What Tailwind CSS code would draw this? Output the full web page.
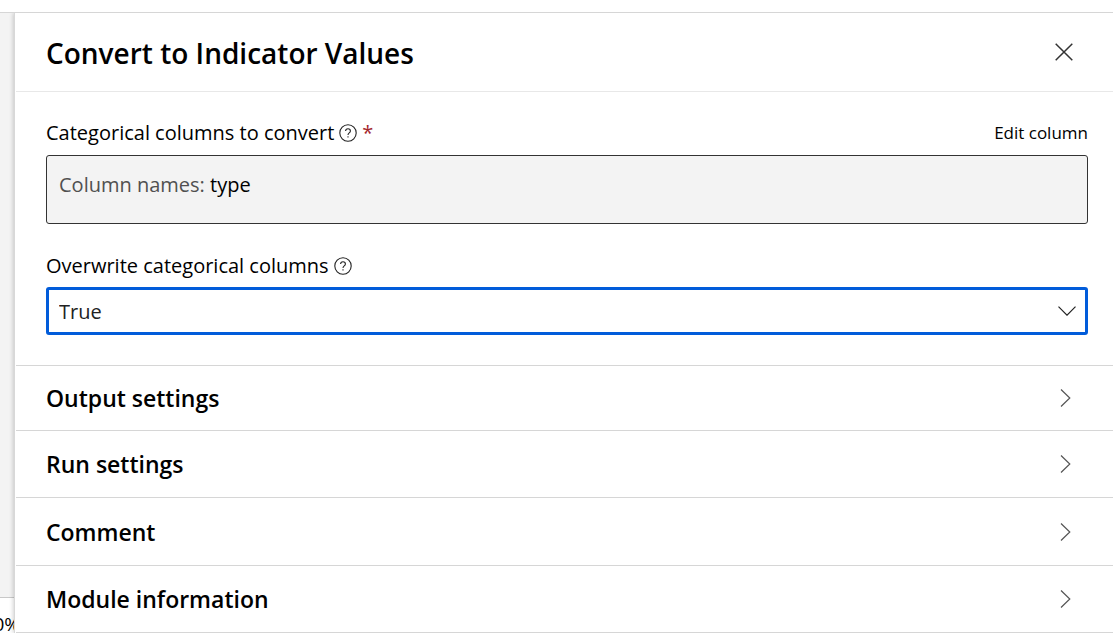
<!DOCTYPE html>
<html lang="en">
<head>
<meta charset="utf-8">
<meta name="viewport" content="width=device-width, initial-scale=1">
<title>Convert to Indicator Values</title>
<script src="https://cdn.jsdelivr.net/npm/@tailwindcss/browser@4"></script>
</head>
<body class="flex h-screen flex-col overflow-hidden bg-white font-['Segoe_UI','Open_Sans',sans-serif] text-black">
<div class="h-[13px] shrink-0 border-b border-[#d6d6d6]"></div>
<div class="flex min-h-0 flex-1">
  <aside class="flex w-3.5 shrink-0 flex-col overflow-hidden bg-[#f3f3f3]">
    <div class="flex-1"></div>
    <div class="flex h-9 justify-end overflow-hidden border-t border-[#c8c8c8] bg-white pt-3 text-[19px] leading-7"><span class="-mr-1.5">0%</span></div>
  </aside>
  <main class="z-10 min-w-0 flex-1 border-l border-[#d8d8d8] bg-white pl-px shadow-[-1px_0_4px_rgba(0,0,0,0.18)] [clip-path:inset(0_0_0_-8px)]">
    <header class="flex h-[79px] items-center justify-between border-b border-[#e8e8e8] pr-10 pl-[30px]">
      <h1 class="pt-0.5 text-[28px] leading-9 font-semibold">Convert to Indicator Values</h1>
      <button type="button" aria-label="Close" class="text-[#333]">
        <svg class="block size-[18px]" viewBox="0 0 18 18" fill="none" stroke="currentColor" stroke-width="1.5"><path d="M.7.7l16.6 16.6M17.3.7L.7 17.3"/></svg>
      </button>
    </header>
    <form class="pt-[27px] pr-[25px] pb-[30px] pl-[30px]">
      <div class="flex h-7 items-center">
        <label for="columns" class="text-[20px] leading-7">Categorical columns to convert</label>
        <button type="button" aria-label="Help for categorical columns" class="ml-[5px]">
          <svg class="block size-[18px]" viewBox="0 0 18 18" fill="none" stroke="#222" stroke-width="1.1"><circle cx="9" cy="9" r="8.2"/><path d="M6.6 7.1c0-1.5 1-2.4 2.4-2.4s2.4.9 2.4 2.2c0 2-2.4 2-2.4 4.1M9 12.3v1.3"/></svg>
        </button>
        <span class="ml-[5px] text-[20px] leading-7 text-[#a4262c]">*</span>
        <button type="button" class="ml-auto text-[17px] leading-7">Edit column</button>
      </div>
      <output id="columns" class="mt-2 block h-[69px] rounded-[3px] border border-[#333] bg-[#f3f3f3] px-3 pt-[15px] text-[20px] leading-7"><span class="text-[#505050]">Column names:</span> type</output>
      <div class="mt-7 flex h-7 items-center">
        <label for="overwrite" class="text-[20px] leading-7">Overwrite categorical columns</label>
        <button type="button" aria-label="Help for overwrite" class="ml-[5px]">
          <svg class="block size-[18px]" viewBox="0 0 18 18" fill="none" stroke="#222" stroke-width="1.1"><circle cx="9" cy="9" r="8.2"/><path d="M6.6 7.1c0-1.5 1-2.4 2.4-2.4s2.4.9 2.4 2.2c0 2-2.4 2-2.4 4.1M9 12.3v1.3"/></svg>
        </button>
      </div>
      <div class="mt-[7px] grid items-center">
        <select id="overwrite" class="col-start-1 row-start-1 h-12 w-full appearance-none rounded-[3px] border-3 border-[#015cda] bg-white px-2.5 pt-0.5 text-[20px] text-[#222] outline-none"><option>True</option><option>False</option></select>
        <svg class="pointer-events-none col-start-1 row-start-1 mr-3 h-[10px] w-[18px] justify-self-end" viewBox="0 0 18 10" fill="none" stroke="#222" stroke-width="1.2"><path d="M.5.7L9 9.2 17.5.7"/></svg>
      </div>
    </form>
    <button type="button" class="flex h-[65px] w-full items-center justify-between border-t border-[#d6d6d6] pr-[42px] pl-[30px] text-[23px] leading-8 font-semibold">Output settings
      <svg class="h-[18px] w-[11px]" viewBox="0 0 11 18" fill="none" stroke="#555" stroke-width="1.2"><path d="M1 .5L9.8 9 1 17.5"/></svg></button>
    <button type="button" class="flex h-[67px] w-full items-center justify-between border-t border-[#d6d6d6] pr-[42px] pl-[30px] text-[23px] leading-8 font-semibold">Run settings
      <svg class="h-[18px] w-[11px]" viewBox="0 0 11 18" fill="none" stroke="#555" stroke-width="1.2"><path d="M1 .5L9.8 9 1 17.5"/></svg></button>
    <button type="button" class="flex h-[68px] w-full items-center justify-between border-t border-[#d6d6d6] pr-[42px] pl-[30px] text-[23px] leading-8 font-semibold">Comment
      <svg class="h-[18px] w-[11px]" viewBox="0 0 11 18" fill="none" stroke="#555" stroke-width="1.2"><path d="M1 .5L9.8 9 1 17.5"/></svg></button>
    <button type="button" class="flex h-[68px] w-full items-center justify-between border-y border-[#d6d6d6] pr-[42px] pl-[30px] text-[23px] leading-8 font-semibold">Module information
      <svg class="h-[18px] w-[11px]" viewBox="0 0 11 18" fill="none" stroke="#555" stroke-width="1.2"><path d="M1 .5L9.8 9 1 17.5"/></svg></button>
  </main>
</div>
</body>
</html>
